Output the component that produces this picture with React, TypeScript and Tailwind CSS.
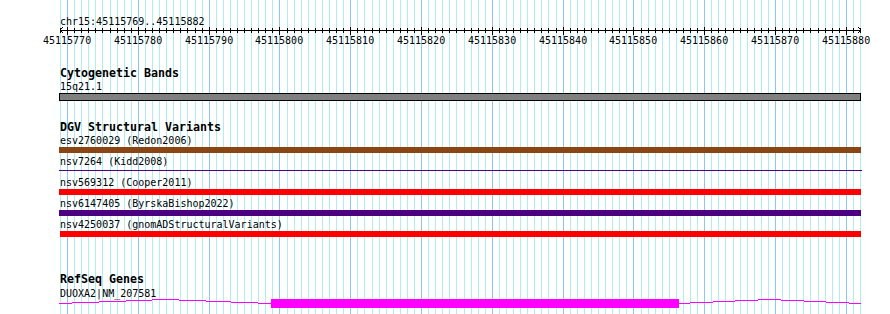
const START = 45115769;
const END = 45115882;
const PX = 800 / (END - START);

// one column per base, 115 grid lines from x=60 to x=860
const cols = Array.from({ length: END - START + 1 }, (_, k) => ({
  bp: START + k,
  x: Math.round(60 + k * PX),
}));

const Grid = () => (
  <svg className="absolute inset-0" width={890} height={314} shapeRendering="crispEdges">
    {cols.map((c) => (
      <rect
        key={c.bp}
        x={c.x}
        y={0}
        width={1}
        height={314}
        fill={c.bp % 10 === 0 ? "#87c8f5" : "#afeeee"}
      />
    ))}
  </svg>
);

const Ruler = () => (
  <div className="relative -ml-[1px] w-[804px] h-[19px]">
    <svg className="absolute left-0 top-0" width={804} height={8} shapeRendering="crispEdges">
      <rect x={1} y={3} width={801} height={1} fill="#000" />
      {cols.map((c) =>
        c.bp % 10 === 0 ? (
          <rect key={c.bp} x={c.x - 59} y={0} width={1} height={8} fill="#000" />
        ) : (
          <rect key={c.bp} x={c.x - 59} y={1} width={1} height={5} fill="#000" />
        )
      )}
      <polyline points="4,0 1,3 4,6" fill="none" stroke="#000" strokeWidth={1} />
      <polyline points="799,0 802,3 799,6" fill="none" stroke="#000" strokeWidth={1} />
    </svg>
    {cols
      .filter((c) => c.bp % 10 === 0)
      .map((c) => (
        <span
          key={c.bp}
          className="absolute top-[7px] w-[48px] h-[13px] leading-[13px] text-center text-[10px] text-black"
          style={{ left: c.x - 59 - 24 }}
        >
          {c.bp}
        </span>
      ))}
  </div>
);

const Title = ({ children, className = "" }: { children: string; className?: string }) => (
  <div className={`h-[13px] leading-[13px] text-[11.63px] font-bold text-black whitespace-nowrap ${className}`}>
    {children}
  </div>
);

const Label = ({ children, className = "" }: { children: string; className?: string }) => (
  <div className={`h-[13px] leading-[13px] text-[10px] text-black whitespace-nowrap ${className}`}>
    {children}
  </div>
);

const variants = [
  { name: "esv2760029 (Redon2006)", bar: "h-[6px] -ml-[1px] w-[802px] bg-[#8b4513]" },
  { name: "nsv7264 (Kidd2008)", bar: "" },
  { name: "nsv569312 (Cooper2011)", bar: "h-[6px] -ml-[1px] w-[802px] bg-[#ff0000]" },
  { name: "nsv6147405 (ByrskaBishop2022)", bar: "h-[6px] -ml-[1px] w-[802px] bg-[#4b0082]" },
  { name: "nsv4250037 (gnomADStructuralVariants)", bar: "h-[6px] w-[801px] bg-[#ff0000]" },
];

// intron "hat" drawn in 1px steps: [x0, x1, y] in page coords
const intronSteps: [number, number, number][] = [
  [59, 72, 303],
  [72, 99, 302],
  [99, 126, 301],
  [126, 152, 300],
  [152, 179, 299],
  [179, 206, 300],
  [206, 231, 301],
  [231, 258, 302],
  [258, 271, 303],
  [679, 690, 303],
  [690, 713, 302],
  [713, 735, 301],
  [735, 758, 300],
  [758, 781, 299],
  [781, 804, 300],
  [804, 826, 301],
  [826, 849, 302],
  [849, 861, 303],
];

const Gene = () => (
  <svg className="block -ml-[1px] -mt-[2px]" width={804} height={12} shapeRendering="crispEdges">
    {intronSteps.map(([a, b, y]) => (
      <rect key={a} x={a - 59} y={y - 298} width={b - a} height={1} fill="#ff00ff" />
    ))}
    <rect x={271 - 59} y={1} width={679 - 271} height={9} fill="#ff00ff" />
  </svg>
);

export default function App() {
  return (
    <div className="relative w-[890px] h-[314px] overflow-hidden bg-white font-['DejaVu_Sans_Mono','Liberation_Mono',monospace]">
      <Grid />
      <div className="relative flex flex-col pl-[60px] pt-[15px]">
        <div className="h-[12px] leading-[13px] text-[10px] text-black">chr15:45115769..45115882</div>
        <Ruler />

        <Title className="mt-[21px]">Cytogenetic Bands</Title>
        <Label>15q21.1</Label>
        <div className="h-[8px] -ml-[1px] w-[802px] border border-black bg-[#808080]" />

        <Title className="mt-[20px]">DGV Structural Variants</Title>
        {variants.map((v) => (
          <div key={v.name} className="mb-[2px]">
            <Label>{v.name}</Label>
            {v.bar ? (
              <div className={v.bar} />
            ) : (
              <div className="h-[6px] pt-[2px] -ml-[1px] w-[803px]">
                <div className="h-[1px] bg-[#4b0082]" />
              </div>
            )}
          </div>
        ))}

        <Title className="mt-[34px]">RefSeq Genes</Title>
        <Label className="mt-[1px]">DUOXA2|NM_207581</Label>
        <Gene />
      </div>
    </div>
  );
}
